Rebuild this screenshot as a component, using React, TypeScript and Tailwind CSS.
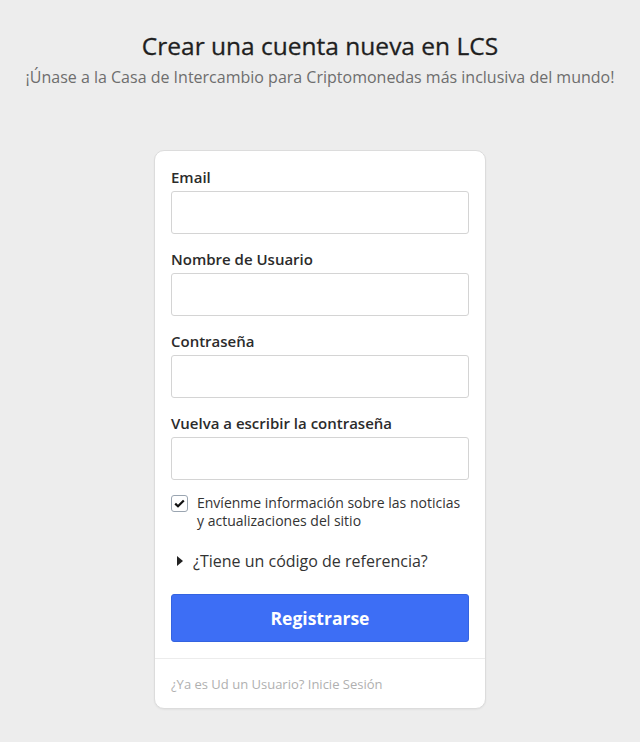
import * as React from "react";

const fields = [
  { label: "Email", type: "email" },
  { label: "Nombre de Usuario", type: "text" },
  { label: "Contraseña", type: "password" },
  { label: "Vuelva a escribir la contraseña", type: "password" },
];

const App = (): JSX.Element => {
  return (
    <div
      className="min-h-[742px] bg-[#ededed] flex flex-col items-center pt-[29px]"
      style={{ fontFamily: '"Open Sans", "Noto Sans", sans-serif' }}
    >
      <h1 className="text-[24.5px] leading-[34px] text-[#1f1f1f] [-webkit-text-stroke:0.3px_#1f1f1f]">
        Crear una cuenta nueva en LCS
      </h1>
      <p className="mt-[3px] text-[16px] leading-[22px] text-[#6e6e6e]">
        ¡Únase a la Casa de Intercambio para Criptomonedas más inclusiva del mundo!
      </p>

      <div className="mt-[62px] w-[332px] bg-white border border-[#dcdcdc] rounded-[10px] shadow-[0_1px_2px_rgba(0,0,0,0.05)]">
        <div className="px-4 pt-[15px] pb-4">
          {fields.map((f) => (
            <div key={f.label} className="mb-[14px]">
              <label className="block text-[15px] leading-[22px] font-semibold text-[#2b2b2b] mb-[3px]">
                {f.label}
              </label>
              <input
                type={f.type}
                className="block w-full h-[43px] border border-[#d4d4d4] rounded-[3px] bg-white px-3 outline-none"
              />
            </div>
          ))}

          <label className="flex items-start gap-[9px] mt-[12px]">
            <span className="mt-[1px] w-[17px] h-[17px] shrink-0 border border-[#9aa5b1] rounded-[3px] flex items-center justify-center">
              <svg width="11" height="9" viewBox="0 0 11 9">
                <path d="M1.2 4.6 L4 7.3 L9.8 1.4" fill="none" stroke="#111" strokeWidth="2.2" />
              </svg>
            </span>
            <span className="text-[14px] leading-[18px] text-[#333]">
              Envíenme información sobre las noticias y actualizaciones del sitio
            </span>
          </label>

          <div className="flex items-center mt-[19px] pl-[6px]">
            <svg width="6" height="10" viewBox="0 0 6 10" className="mr-[10px]">
              <path d="M0 0 L6 5 L0 10 Z" fill="#222" />
            </svg>
            <span className="text-[16px] leading-[24px] text-[#333]">¿Tiene un código de referencia?</span>
          </div>

          <button className="mt-[21px] w-full h-[48px] rounded-[3px] bg-[#3d6ef5] border border-[#3463e0] text-white text-[17.5px] font-bold">
            Registrarse
          </button>
        </div>
        <div className="border-t border-[#ececec] px-4 pt-[12px] pb-[13px]">
          <span className="text-[13px] leading-[18px] text-[#b0b0b0]">¿Ya es Ud un Usuario? Inicie Sesión</span>
        </div>
      </div>
    </div>
  );
};

export default App;
